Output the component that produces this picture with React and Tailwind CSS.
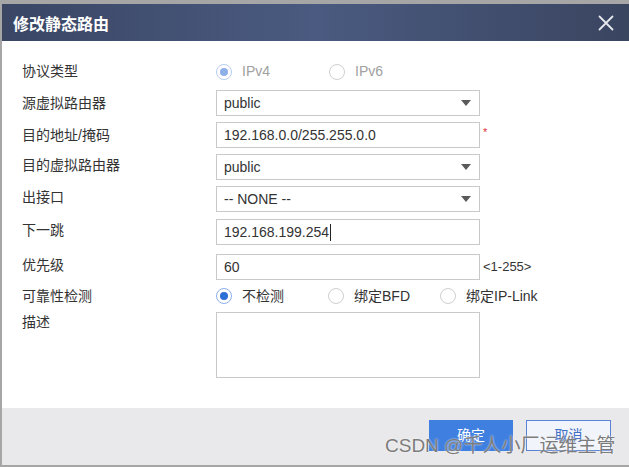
import React from "react";

const font = { fontFamily: '"Liberation Sans", Arial, "Noto Sans CJK SC", sans-serif' };

function Radio({ checked, disabled, label, className = "" }) {
  return (
    <div className={`flex items-center ${className}`}>
      <div
        className={`w-[16px] h-[16px] rounded-full border flex items-center justify-center bg-white ${
          checked ? (disabled ? "border-[#b9cdef]" : "border-[#8fb0ea]") : "border-[#cfcfcf]"
        }`}
      >
        {checked && (
          <div className={`w-[8px] h-[8px] rounded-full ${disabled ? "bg-[#8eb0e9]" : "bg-[#2f6fd9]"}`} />
        )}
      </div>
      <span className={`ml-[10px] text-[14px] ${disabled ? "text-[#a0a0a0]" : "text-[#333]"}`}>{label}</span>
    </div>
  );
}

function Select({ value }) {
  return (
    <div className="w-[264px] h-[26px] border border-[#c9c9c9] bg-white flex items-center justify-between pl-[7px] pr-[8px]">
      <span className="text-[14px] text-[#333]">{value}</span>
      <svg width="10" height="6" viewBox="0 0 10 6">
        <path d="M0 0 L10 0 L5 6 Z" fill="#5a5a5a" />
      </svg>
    </div>
  );
}

function Input({ value, cursor }) {
  return (
    <div className="w-[264px] h-[26px] border border-[#c9c9c9] bg-white flex items-center pl-[7px]">
      <span className="text-[14px] text-[#333]">{value}</span>
      {cursor && <span className="w-[1px] h-[17px] bg-[#222] ml-[1px]" />}
    </div>
  );
}

function Label({ children, lift }) {
  return (
    <div className={`w-[194px] shrink-0 text-[14px] text-[#333] ${lift ? "pb-[4px]" : ""}`}>{children}</div>
  );
}

export default function App() {
  return (
    <div className="w-[629px] h-[467px] bg-[#a6a6a6] pt-[4px] pl-[2px] pb-[2px] relative overflow-hidden" style={font}>
      <div className="flex flex-col h-full">
        {/* Title bar */}
        <div className="h-[37px] shrink-0 flex items-center justify-between pl-[11px] pr-[15px] bg-gradient-to-r from-[#3a4664] via-[#4a5a80] to-[#3a4560]">
          <span className="text-white font-bold text-[16px]" style={{ fontFamily: '"Noto Sans CJK SC", sans-serif' }}>
            修改静态路由
          </span>
          <svg width="16" height="16" viewBox="0 0 16 16">
            <path d="M1.5 1.5 L14.5 14.5 M14.5 1.5 L1.5 14.5" stroke="#e6e8ee" strokeWidth="1.8" strokeLinecap="round" />
          </svg>
        </div>

        {/* Body */}
        <div className="h-[367px] shrink-0 bg-white pl-[20px] pt-[18px] flex flex-col">
          <div className="flex items-center h-[25px]">
            <Label>协议类型</Label>
            <div className="flex items-center">
              <Radio checked disabled label="IPv4" className="w-[113px]" />
              <Radio disabled label="IPv6" />
            </div>
          </div>
          <div className="flex items-center mt-[6px]">
            <Label>源虚拟路由器</Label>
            <Select value="public" />
          </div>
          <div className="flex items-center mt-[6px]">
            <Label>目的地址/掩码</Label>
            <Input value="192.168.0.0/255.255.0.0" />
            <span className="ml-[3px] -mt-[6px] text-[11px] text-[#e0303a]">*</span>
          </div>
          <div className="flex items-center mt-[6px]">
            <Label lift>目的虚拟路由器</Label>
            <Select value="public" />
          </div>
          <div className="flex items-center mt-[6px]">
            <Label lift>出接口</Label>
            <Select value="-- NONE --" />
          </div>
          <div className="flex items-center mt-[7px]">
            <Label lift>下一跳</Label>
            <Input value="192.168.199.254" cursor />
          </div>
          <div className="flex items-center mt-[9px]">
            <Label lift>优先级</Label>
            <Input value="60" />
            <span className="ml-[3px] text-[13px] text-[#333]">&lt;1-255&gt;</span>
          </div>
          <div className="flex items-center mt-[4px] h-[24px]">
            <Label>可靠性检测</Label>
            <div className="flex items-center">
              <Radio checked label="不检测" className="w-[112px]" />
              <Radio label="绑定BFD" className="w-[112px]" />
              <Radio label="绑定IP-Link" />
            </div>
          </div>
          <div className="flex items-start mt-[4px]">
            <Label>描述</Label>
            <div className="w-[264px] h-[66px] border border-[#c9c9c9] bg-white" />
          </div>
        </div>

        {/* Footer */}
        <div className="h-[57px] shrink-0 bg-[#e9e9eb] flex items-start justify-end pt-[12px] pr-[18px] gap-[13px]">
          <div className="w-[84px] h-[31px] bg-[#3f7fe0] flex items-center justify-center text-white text-[14px]">
            确定
          </div>
          <div className="w-[85px] h-[31px] border border-[#5b83d4] bg-[#f1f4fa] flex items-center justify-center text-[#3f6fc6] text-[14px]">
            取消
          </div>
        </div>
      </div>

      {/* Watermark */}
      <div
        className="absolute left-[385px] top-[436px] text-[19px] leading-none text-[#7c7c7c] whitespace-nowrap"
        style={{ textShadow: "0 0 2px rgba(255,255,255,0.9)" }}
      >
        CSDN @千人小厂运维主管
      </div>
    </div>
  );
}
